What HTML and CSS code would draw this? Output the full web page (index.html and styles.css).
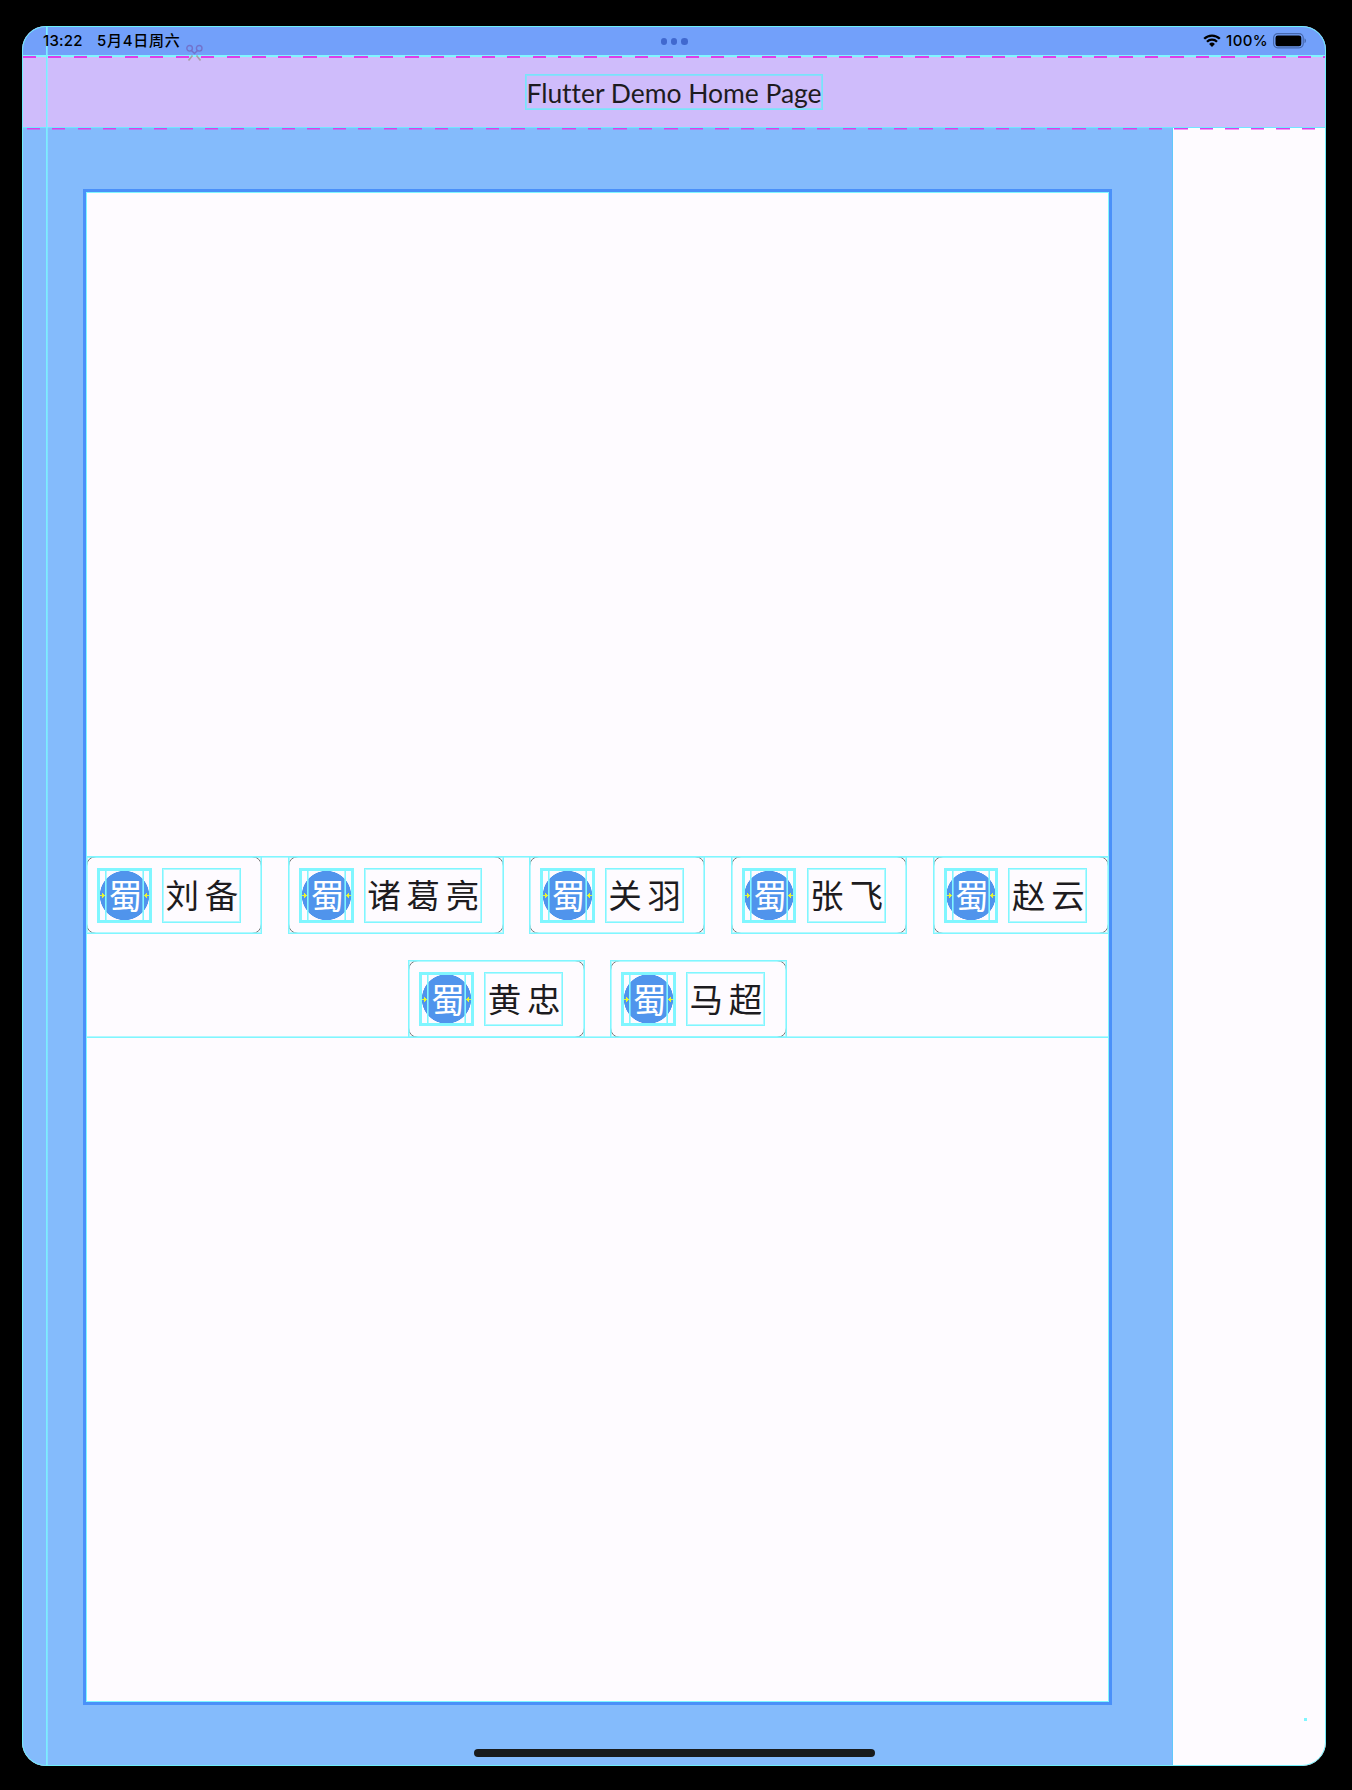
FILE: index.html
```html
<!DOCTYPE html>
<html lang="zh-CN">
<head>
<meta charset="utf-8">
<title>Flutter Demo Home Page</title>
<link rel="stylesheet" href="styles.css">
</head>
<body>
<div class="screen">
  <header class="status">
    <span class="time">13:22</span><span class="date">5月4日周六</span>
    <svg class="scissors" viewBox="0 0 17 19" fill="none"><g stroke="#7272cc" stroke-width="1.4"><circle cx="3.6" cy="4.3" r="2.8"/><circle cx="13.2" cy="4.3" r="2.8"/><path d="M5.4 6.5 9 10M11.5 6.5 8 10"/></g><path d="M6.5 11.5 2.5 16.5M10.5 11.5 14.5 16.5" stroke="#a89ca8" stroke-width="1.7"/></svg>
    <div class="dots"><i></i><i></i><i></i></div>
    <div class="device">
      <svg class="wifi" viewBox="0 0 18 13"><path d="M1.2 4.8A11 11 0 0 1 16.8 4.8M4 7.7A7 7 0 0 1 14 7.7" fill="none" stroke="#000" stroke-width="2.3"/><path d="M9 13 6.1 10A4.2 4.2 0 0 1 11.9 10Z"/></svg>
      <span class="percent">100%</span>
      <svg class="battery" viewBox="0 0 34 16"><rect x=".6" y=".6" width="29.6" height="14.3" rx="4.2" fill="none" stroke="#4668ae" stroke-width="1.2"/><rect x="2.5" y="2.4" width="25.8" height="10.8" rx="2.3"/><path d="M31.5 5.3Q33 6 33 7.8T31.5 10.3Z" fill="#4668ae"/></svg>
    </div>
  </header>
  <div class="appbar"><h1>Flutter Demo Home Page</h1></div>
  <main class="body">
    <section class="panel">
      <div class="frame">
        <div class="wrap">
          <div class="chip"><div class="avatar"><b>蜀</b></div><span class="name">刘备</span></div>
          <div class="chip long"><div class="avatar"><b>蜀</b></div><span class="name">诸葛亮</span></div>
          <div class="chip"><div class="avatar"><b>蜀</b></div><span class="name">关羽</span></div>
          <div class="chip"><div class="avatar"><b>蜀</b></div><span class="name">张飞</span></div>
          <div class="chip"><div class="avatar"><b>蜀</b></div><span class="name">赵云</span></div>
          <div class="chip"><div class="avatar"><b>蜀</b></div><span class="name">黄忠</span></div>
          <div class="chip"><div class="avatar"><b>蜀</b></div><span class="name">马超</span></div>
        </div>
      </div>
    </section>
  </main>
  <div class="guide"></div>
  <div class="outline"></div>
  <div class="point"></div>
  <div class="home"></div>
</div>
</body>
</html>
```
FILE: styles.css
```css
* { box-sizing: border-box; }
body {
  --cyan: #80f6ff;
  --soft: rgba(128, 246, 255, .6);
  margin: 0;
  height: 1790px;
  padding: 26px 26px 24px 22px;
  background: #000;
  color: #1d1b20;
  font-family: Inter, "Noto Sans CJK SC", sans-serif;
}
.screen {
  position: relative;
  height: 1740px;
  display: flex;
  flex-direction: column;
  overflow: hidden;
  border-radius: 24px;
  background: #fefbff;
}
.status {
  position: relative;
  display: flex;
  align-items: center;
  height: 30px;
  padding: 0 19px 0 21px;
  background: #72a0fa;
  border-bottom: 1px solid #4a90f9;
  color: #000;
  font-size: 15px;
  font-weight: 500;
  line-height: 30px;
  white-space: nowrap;
}
.time { position: relative; z-index: 2; width: 54px; letter-spacing: .2px; }
.date { letter-spacing: .75px; }
.scissors { position: absolute; left: 164px; top: 18px; width: 17px; height: 19px; z-index: 3; }
.dots { position: absolute; left: 638.6px; top: 12px; display: flex; gap: 3.6px; }
.dots i { width: 6.6px; height: 6.6px; border-radius: 50%; background: #4068cf; }
.device { display: flex; align-items: center; margin-left: auto; }
.wifi { width: 18px; height: 13px; margin-right: 5px; }
.percent { width: 47px; letter-spacing: .4px; }
.battery { width: 34px; height: 16px; }

.appbar {
  position: relative;
  display: flex;
  justify-content: center;
  height: 72px;
  padding: 18px 0 0;
  background: #cfbcfb;
}
.appbar::before, .appbar::after {
  content: "";
  position: absolute;
  left: 0;
  right: 0;
}
.appbar::before {
  top: -1px;
  height: 3px;
  background:
    repeating-linear-gradient(90deg, #de3ee8 0 13px, transparent 13px 25.5px) 1px 1px / 100% 2px no-repeat,
    linear-gradient(var(--cyan), var(--cyan)) 0 0 / 100% 2px no-repeat;
}
.appbar::after {
  bottom: -2px;
  height: 3px;
  background:
    repeating-linear-gradient(90deg, #de3ee8 0 13px, transparent 13px 25.5px) 5px 1px / 100% 1.5px no-repeat,
    linear-gradient(#70e8ff, #70e8ff) 0 0 / 100% 1px no-repeat;
}
h1 {
  margin: 0;
  width: 298px;
  height: 36px;
  border: 1px solid #78e4fa;
  box-shadow: inset 0 0 0 1px rgba(120, 228, 250, .75);
  font-family: Lato, sans-serif;
  font-size: 26.5px;
  font-weight: 400;
  font-variant-ligatures: none;
  line-height: 37px;
  letter-spacing: -.03px;
  text-align: center;
  white-space: nowrap;
}
.body { flex: 1; display: flex; }
.panel {
  width: 1151px;
  padding: 61px 61px;
  background: #84bbfc;
  border-right: 1px solid #60c8fc;
}
.frame {
  width: 1029px;
  height: 1516px;
  display: flex;
  align-items: center;
  background: #fefbff;
  border: 3px solid #4a90f9;
  box-shadow: inset 0 0 0 1px var(--cyan);
}
.wrap {
  display: flex;
  flex-wrap: wrap;
  align-content: space-between;
  justify-content: center;
  gap: 25px 25.5px;
  width: 100%;
  height: 182px;
  box-shadow: inset 0 1px var(--cyan), inset 0 2px var(--soft), inset 0 -1px var(--cyan), inset 0 -2px var(--soft);
}
.chip {
  position: relative;
  display: flex;
  gap: 10.2px;
  width: 176.3px;
  height: 78.3px;
  padding: 11px 10px;
  border: 1px solid #777;
  border-radius: 10px;
}
.chip.long { width: 215.6px; }
.chip::after {
  content: "";
  position: absolute;
  inset: -1px;
  border: 1px solid var(--cyan);
  box-shadow: inset 0 0 0 1px var(--soft);
}
.avatar {
  position: relative;
  width: 54.6px;
  height: 54.6px;
  border: 3px solid var(--cyan);
  background: radial-gradient(circle at center, #5094ec 24.3px, transparent 24.9px);
}
.avatar::before {
  content: "";
  position: absolute;
  z-index: 1;
  inset: 0 5px;
  border: solid var(--cyan);
  border-width: 0 1px;
  box-shadow: inset 1px 0 var(--soft), inset -1px 0 var(--soft);
}
.avatar::after {
  content: "";
  position: absolute;
  z-index: 2;
  left: 0;
  right: 0;
  top: 22px;
  height: 5px;
  background:
    linear-gradient(#e8f531, #e8f531) 0 2px / 3px 1px no-repeat,
    linear-gradient(#e8f531, #e8f531) 100% 2px / 3px 1px no-repeat,
    conic-gradient(from 225deg at 100% 50%, #e8f531 90deg, transparent 0) 2px 0 / 3px 5px no-repeat,
    conic-gradient(from 45deg at 0 50%, #e8f531 90deg, transparent 0) calc(100% - 2px) 0 / 3px 5px no-repeat;
}
.avatar b {
  display: block;
  width: 50px;
  padding: 0 0 0 8.5px;
  color: #fff;
  font: 400 34px/47px "Noto Sans CJK SC", sans-serif;
}
.name {
  height: 54.6px;
  padding-left: 2.5px;
  border: 1px solid var(--cyan);
  box-shadow: inset 0 0 0 1px var(--soft);
  font: 400 33.5px/50px "Noto Sans CJK SC", sans-serif;
  letter-spacing: 5.8px;
  width: 79px;
  white-space: nowrap;
}
.long .name { width: 118px; }
.guide {
  position: absolute;
  left: 24px;
  top: 0;
  bottom: 0;
  width: 2px;
  background: linear-gradient(90deg, #7bedff 1px, var(--soft) 1px);
}
.outline {
  position: absolute;
  inset: 0;
  border: 1px solid #6eeffa;
  border-radius: 24px;
}
.point { position: absolute; left: 1282px; top: 1692px; width: 3px; height: 3px; background: var(--cyan); }
.home { position: absolute; left: 451.5px; top: 1723px; width: 401.5px; height: 7.5px; border-radius: 4px; background: #181a1b; }
```
